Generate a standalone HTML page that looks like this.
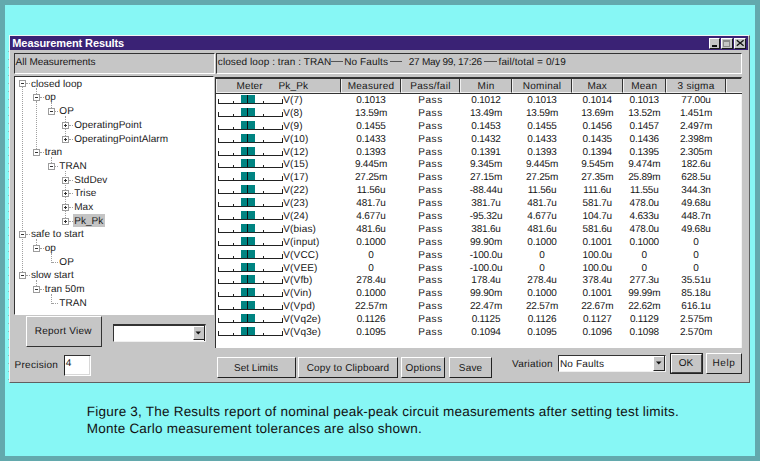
<!DOCTYPE html><html><head><meta charset="utf-8"><style>
*{margin:0;padding:0;box-sizing:border-box}
html,body{width:760px;height:461px;overflow:hidden;background:#63a9ad}
body{position:relative;font-family:"Liberation Sans",sans-serif;font-size:10px;letter-spacing:0.15px;color:#161616;text-rendering:geometricPrecision}
.b{position:absolute}
.t{position:absolute;white-space:pre;line-height:1}
</style></head><body>
<div class="b" style="left:5px;top:5px;width:750px;height:451px;background:#87f7f5"></div>
<div class="b" style="left:8px;top:51px;width:1px;height:330px;background:repeating-linear-gradient(to bottom,#8ab8bb 0,#8ab8bb 1px,transparent 1px,transparent 8px)"></div>
<div class="b" style="left:9px;top:35px;width:741px;height:348px;background:#c6c6c6;border-top:1px solid #f4f4f4;border-left:1px solid #f4f4f4;border-right:1px solid #606060;border-bottom:1px solid #606060"></div>
<div class="b" style="left:10px;top:36px;width:738px;height:13.7px;background:#3a2275"></div>
<div class="t" style="left:12.3px;top:38.3px;font-size:11px;font-weight:bold;color:#fff;letter-spacing:-0.1px;text-rendering:auto">Measurement Results</div>
<div class="b" style="left:709px;top:38px;width:11px;height:11px;background:#c6c6c6;border-top:1px solid #fff;border-left:1px solid #fff;border-right:1px solid #1a1a1a;border-bottom:1px solid #1a1a1a"></div>
<div class="b" style="left:721px;top:38px;width:11.5px;height:11px;background:#c6c6c6;border-top:1px solid #fff;border-left:1px solid #fff;border-right:1px solid #1a1a1a;border-bottom:1px solid #1a1a1a"></div>
<div class="b" style="left:734px;top:38px;width:12px;height:11px;background:#c6c6c6;border-top:1px solid #fff;border-left:1px solid #fff;border-right:1px solid #1a1a1a;border-bottom:1px solid #1a1a1a"></div>
<div class="b" style="left:712px;top:45px;width:4.8px;height:1.5px;background:#111"></div>
<div class="b" style="left:723.3px;top:39.5px;width:6.7px;height:7.2px;border:1px solid #8a8a8a;border-top-width:2px"></div>
<svg class="b" style="left:734px;top:38px" width="12" height="11"><path d="M2.8 2.3 L9.6 7.8 M9.6 2.3 L2.8 7.8" stroke="#111" stroke-width="1.3"/></svg>
<div class="b" style="left:14px;top:53px;width:200.5px;height:21px;border-top:1px solid #333;border-left:1px solid #333;border-right:1px solid #fff;border-bottom:1px solid #fff"></div>
<div class="t" style="left:15.5px;top:58px;letter-spacing:0">All Measurements</div>
<div class="b" style="left:215.5px;top:53px;width:526px;height:20.5px;border-top:1px solid #333;border-left:1px solid #333;border-right:1px solid #fff;border-bottom:1px solid #fff"></div>
<div class="t" style="left:217.8px;top:58px;letter-spacing:0.08px">closed loop : tran : TRAN</div>
<div class="b" style="left:330.5px;top:60.6px;width:12px;height:1px;background:#555"></div>
<div class="t" style="left:344.2px;top:58px;letter-spacing:0.12px">No Faults</div>
<div class="b" style="left:389.7px;top:60.6px;width:12.5px;height:1px;background:#555"></div>
<div class="t" style="left:408.8px;top:58px;letter-spacing:-0.27px">27 May 99, 17:26</div>
<div class="b" style="left:484px;top:60.6px;width:12.6px;height:1px;background:#555"></div>
<div class="t" style="left:498.5px;top:58px;letter-spacing:0.12px">fail/total = 0/19</div>
<div class="b" style="left:14px;top:75.5px;width:200px;height:239px;background:#fff;border-top:1px solid #333;border-left:1px solid #333;border-right:1px solid #fff;border-bottom:1px solid #fff"></div>
<div class="b" style="left:22px;top:87px;width:1px;height:185px;border-left:1px dotted #a0a0a0"></div>
<div class="b" style="left:36px;top:88px;width:1px;height:6px;border-left:1px dotted #a0a0a0"></div>
<div class="b" style="left:36px;top:101px;width:1px;height:48px;border-left:1px dotted #a0a0a0"></div>
<div class="b" style="left:51px;top:102px;width:1px;height:6px;border-left:1px dotted #a0a0a0"></div>
<div class="b" style="left:51px;top:157px;width:1px;height:6px;border-left:1px dotted #a0a0a0"></div>
<div class="b" style="left:65px;top:116px;width:1px;height:6px;border-left:1px dotted #a0a0a0"></div>
<div class="b" style="left:65px;top:129px;width:1px;height:7px;border-left:1px dotted #a0a0a0"></div>
<div class="b" style="left:65px;top:171px;width:1px;height:47px;border-left:1px dotted #a0a0a0"></div>
<div class="b" style="left:36px;top:239px;width:1px;height:6px;border-left:1px dotted #a0a0a0"></div>
<div class="b" style="left:36px;top:280px;width:1px;height:6px;border-left:1px dotted #a0a0a0"></div>
<div class="b" style="left:51px;top:253px;width:1px;height:10px;border-left:1px dotted #a0a0a0"></div>
<div class="b" style="left:51px;top:294px;width:1px;height:10px;border-left:1px dotted #a0a0a0"></div>
<div class="b" style="left:26px;top:83px;width:4px;height:1px;border-top:1px dotted #a0a0a0"></div>
<div class="b" style="left:19px;top:80px;width:7px;height:7px;border:1px solid #9c9c9c;background:#fff"></div>
<div class="b" style="left:21px;top:83px;width:3px;height:1px;background:#333"></div>
<div class="t" style="left:30.9px;top:80px;color:#1a1a1a;letter-spacing:0.06px">closed loop</div>
<div class="b" style="left:40px;top:97px;width:4px;height:1px;border-top:1px dotted #a0a0a0"></div>
<div class="b" style="left:33px;top:94px;width:7px;height:7px;border:1px solid #9c9c9c;background:#fff"></div>
<div class="b" style="left:35px;top:97px;width:3px;height:1px;background:#333"></div>
<div class="t" style="left:44.7px;top:93px;color:#1a1a1a;letter-spacing:0.06px">op</div>
<div class="b" style="left:55px;top:111px;width:3px;height:1px;border-top:1px dotted #a0a0a0"></div>
<div class="b" style="left:48px;top:108px;width:7px;height:7px;border:1px solid #9c9c9c;background:#fff"></div>
<div class="b" style="left:50px;top:111px;width:3px;height:1px;background:#333"></div>
<div class="t" style="left:59.3px;top:107px;color:#1a1a1a;letter-spacing:0.06px">OP</div>
<div class="b" style="left:69px;top:125px;width:4px;height:1px;border-top:1px dotted #a0a0a0"></div>
<div class="b" style="left:62px;top:122px;width:7px;height:7px;border:1px solid #9c9c9c;background:#fff"></div>
<div class="b" style="left:64px;top:125px;width:3px;height:1px;background:#333"></div>
<div class="b" style="left:65px;top:124px;width:1px;height:3px;background:#333"></div>
<div class="t" style="left:74.2px;top:121px;color:#1a1a1a;letter-spacing:0.06px">OperatingPoint</div>
<div class="b" style="left:69px;top:139px;width:4px;height:1px;border-top:1px dotted #a0a0a0"></div>
<div class="b" style="left:62px;top:136px;width:7px;height:7px;border:1px solid #9c9c9c;background:#fff"></div>
<div class="b" style="left:64px;top:139px;width:3px;height:1px;background:#333"></div>
<div class="b" style="left:65px;top:138px;width:1px;height:3px;background:#333"></div>
<div class="t" style="left:74.2px;top:135px;color:#1a1a1a;letter-spacing:0.06px">OperatingPointAlarm</div>
<div class="b" style="left:40px;top:152px;width:4px;height:1px;border-top:1px dotted #a0a0a0"></div>
<div class="b" style="left:33px;top:149px;width:7px;height:7px;border:1px solid #9c9c9c;background:#fff"></div>
<div class="b" style="left:35px;top:152px;width:3px;height:1px;background:#333"></div>
<div class="t" style="left:44.7px;top:148px;color:#1a1a1a;letter-spacing:0.06px">tran</div>
<div class="b" style="left:55px;top:166px;width:3px;height:1px;border-top:1px dotted #a0a0a0"></div>
<div class="b" style="left:48px;top:163px;width:7px;height:7px;border:1px solid #9c9c9c;background:#fff"></div>
<div class="b" style="left:50px;top:166px;width:3px;height:1px;background:#333"></div>
<div class="t" style="left:59.3px;top:162px;color:#1a1a1a;letter-spacing:0.06px">TRAN</div>
<div class="b" style="left:69px;top:180px;width:4px;height:1px;border-top:1px dotted #a0a0a0"></div>
<div class="b" style="left:62px;top:177px;width:7px;height:7px;border:1px solid #9c9c9c;background:#fff"></div>
<div class="b" style="left:64px;top:180px;width:3px;height:1px;background:#333"></div>
<div class="b" style="left:65px;top:179px;width:1px;height:3px;background:#333"></div>
<div class="t" style="left:74.2px;top:176px;color:#1a1a1a;letter-spacing:0.06px">StdDev</div>
<div class="b" style="left:69px;top:193px;width:4px;height:1px;border-top:1px dotted #a0a0a0"></div>
<div class="b" style="left:62px;top:190px;width:7px;height:7px;border:1px solid #9c9c9c;background:#fff"></div>
<div class="b" style="left:64px;top:193px;width:3px;height:1px;background:#333"></div>
<div class="b" style="left:65px;top:192px;width:1px;height:3px;background:#333"></div>
<div class="t" style="left:74.2px;top:189px;color:#1a1a1a;letter-spacing:0.06px">Trise</div>
<div class="b" style="left:69px;top:207px;width:4px;height:1px;border-top:1px dotted #a0a0a0"></div>
<div class="b" style="left:62px;top:204px;width:7px;height:7px;border:1px solid #9c9c9c;background:#fff"></div>
<div class="b" style="left:64px;top:207px;width:3px;height:1px;background:#333"></div>
<div class="b" style="left:65px;top:206px;width:1px;height:3px;background:#333"></div>
<div class="t" style="left:74.2px;top:203px;color:#1a1a1a;letter-spacing:0.06px">Max</div>
<div class="b" style="left:73px;top:213.5px;width:32.3px;height:13px;background:#c4c4c4"></div>
<div class="b" style="left:69px;top:221px;width:4px;height:1px;border-top:1px dotted #a0a0a0"></div>
<div class="b" style="left:62px;top:218px;width:7px;height:7px;border:1px solid #9c9c9c;background:#fff"></div>
<div class="b" style="left:64px;top:221px;width:3px;height:1px;background:#333"></div>
<div class="b" style="left:65px;top:220px;width:1px;height:3px;background:#333"></div>
<div class="t" style="left:74.2px;top:217px;color:#1a1a1a;letter-spacing:0.06px">Pk_Pk</div>
<div class="b" style="left:26px;top:234px;width:4px;height:1px;border-top:1px dotted #a0a0a0"></div>
<div class="b" style="left:19px;top:231px;width:7px;height:7px;border:1px solid #9c9c9c;background:#fff"></div>
<div class="b" style="left:21px;top:234px;width:3px;height:1px;background:#333"></div>
<div class="t" style="left:30.9px;top:230px;color:#1a1a1a;letter-spacing:0.06px">safe to start</div>
<div class="b" style="left:40px;top:248px;width:4px;height:1px;border-top:1px dotted #a0a0a0"></div>
<div class="b" style="left:33px;top:245px;width:7px;height:7px;border:1px solid #9c9c9c;background:#fff"></div>
<div class="b" style="left:35px;top:248px;width:3px;height:1px;background:#333"></div>
<div class="t" style="left:44.7px;top:244px;color:#1a1a1a;letter-spacing:0.06px">op</div>
<div class="b" style="left:52px;top:262px;width:6px;height:1px;border-top:1px dotted #a0a0a0"></div>
<div class="t" style="left:59.3px;top:258px;color:#1a1a1a;letter-spacing:0.06px">OP</div>
<div class="b" style="left:26px;top:275px;width:4px;height:1px;border-top:1px dotted #a0a0a0"></div>
<div class="b" style="left:19px;top:272px;width:7px;height:7px;border:1px solid #9c9c9c;background:#fff"></div>
<div class="b" style="left:21px;top:275px;width:3px;height:1px;background:#333"></div>
<div class="t" style="left:30.9px;top:271px;color:#1a1a1a;letter-spacing:0.06px">slow start</div>
<div class="b" style="left:40px;top:289px;width:4px;height:1px;border-top:1px dotted #a0a0a0"></div>
<div class="b" style="left:33px;top:286px;width:7px;height:7px;border:1px solid #9c9c9c;background:#fff"></div>
<div class="b" style="left:35px;top:289px;width:3px;height:1px;background:#333"></div>
<div class="t" style="left:44.7px;top:285px;color:#1a1a1a;letter-spacing:0.06px">tran 50m</div>
<div class="b" style="left:52px;top:303px;width:6px;height:1px;border-top:1px dotted #a0a0a0"></div>
<div class="t" style="left:59.3px;top:299px;color:#1a1a1a;letter-spacing:0.06px">TRAN</div>
<div class="b" style="left:25.6px;top:315.6px;width:76.4px;height:31px;background:#c6c6c6;border-top:1px solid #fff;border-left:1px solid #fff;border-right:1px solid #333;border-bottom:1px solid #333"></div>
<div class="t" style="left:34.8px;top:327px;letter-spacing:0.24px">Report View</div>
<div class="b" style="left:113px;top:324px;width:93px;height:18px;background:#fff;border-top:2px solid #333;border-left:1px solid #333;border-right:1px solid #f0f0f0;border-bottom:1px solid #f0f0f0;box-shadow:inset -1px 0 #222"></div>
<div class="b" style="left:193px;top:326px;width:11px;height:14px;background:#c6c6c6;border-top:1px solid #fff;border-left:1px solid #fff;border-bottom:1px solid #222"></div>
<svg class="b" style="left:193px;top:326px" width="11" height="14"><path d="M2.5 5.5 L8 5.5 L5.25 8.5 Z" fill="#111"/></svg>
<div class="t" style="left:14.5px;top:361.3px;letter-spacing:0.28px">Precision</div>
<div class="b" style="left:64px;top:354.5px;width:26.5px;height:21px;background:#fff;border-top:1.5px solid #333;border-left:1.5px solid #222;border-right:1px solid #fff;border-bottom:1px solid #fff;box-shadow:inset -1px -1px #d8d8d8"></div>
<div class="t" style="left:65.8px;top:359px;letter-spacing:0">4</div>
<div class="b" style="left:215px;top:77px;width:527px;height:271px;background:#fff;border-left:1px solid #333;border-top:2px solid #333;border-right:1px solid #f4f4f4"></div>
<div class="b" style="left:216px;top:79px;width:525.5px;height:14.5px;background:#c6c6c6;border-bottom:1.5px solid #333"></div>
<div class="b" style="left:216px;top:79px;width:125px;height:13.5px;border-left:1px solid #f0f0f0;border-bottom:1px solid #f0f0f0;border-right:1px solid #333"></div>
<div class="b" style="left:341px;top:79px;width:60px;height:13.5px;border-left:1px solid #f0f0f0;border-bottom:1px solid #f0f0f0;border-right:1px solid #333"></div>
<div class="b" style="left:401px;top:79px;width:59px;height:13.5px;border-left:1px solid #f0f0f0;border-bottom:1px solid #f0f0f0;border-right:1px solid #333"></div>
<div class="b" style="left:460px;top:79px;width:52px;height:13.5px;border-left:1px solid #f0f0f0;border-bottom:1px solid #f0f0f0;border-right:1px solid #333"></div>
<div class="b" style="left:512px;top:79px;width:60px;height:13.5px;border-left:1px solid #f0f0f0;border-bottom:1px solid #f0f0f0;border-right:1px solid #333"></div>
<div class="b" style="left:572px;top:79px;width:50.5px;height:13.5px;border-left:1px solid #f0f0f0;border-bottom:1px solid #f0f0f0;border-right:1px solid #333"></div>
<div class="b" style="left:622.5px;top:79px;width:43.5px;height:13.5px;border-left:1px solid #f0f0f0;border-bottom:1px solid #f0f0f0;border-right:1px solid #333"></div>
<div class="b" style="left:666px;top:79px;width:60px;height:13.5px;border-left:1px solid #f0f0f0;border-bottom:1px solid #f0f0f0;border-right:1px solid #333"></div>
<div class="b" style="left:726px;top:79px;width:15.5px;height:13.5px;border-left:1px solid #f0f0f0;border-bottom:1px solid #f0f0f0;"></div>
<div class="t" style="left:236.5px;top:82px;">Meter</div>
<div class="t" style="left:278.5px;top:82px;">Pk_Pk</div>
<div class="t" style="left:341px;top:82px;width:60px;text-align:center;letter-spacing:0.28px">Measured</div>
<div class="t" style="left:401px;top:82px;width:59px;text-align:center;letter-spacing:0.28px">Pass/fail</div>
<div class="t" style="left:460px;top:82px;width:52px;text-align:center;letter-spacing:0.28px">Min</div>
<div class="t" style="left:512px;top:82px;width:60px;text-align:center;letter-spacing:0.28px">Nominal</div>
<div class="t" style="left:572px;top:82px;width:50.5px;text-align:center;letter-spacing:0.28px">Max</div>
<div class="t" style="left:622.5px;top:82px;width:43.5px;text-align:center;letter-spacing:0.28px">Mean</div>
<div class="t" style="left:666px;top:82px;width:60px;text-align:center;letter-spacing:0.28px">3 sigma</div>
<div class="b" style="left:218px;top:99px;width:64.5px;height:5px;border-left:1px solid #222;border-right:1px solid #222;border-bottom:1px solid #222"></div>
<div class="b" style="left:232.5px;top:101px;width:1px;height:2px;background:#222"></div>
<div class="b" style="left:262.5px;top:101px;width:1px;height:2px;background:#222"></div>
<div class="b" style="left:240.6px;top:95px;width:14px;height:8px;background:#008482"></div>
<div class="b" style="left:247px;top:95px;width:1px;height:8px;background:#111"></div>
<div class="t" style="left:283.3px;top:96px;">V(7)</div>
<div class="t" style="left:341px;top:96px;width:60px;text-align:center;letter-spacing:-0.2px">0.1013</div>
<div class="t" style="left:401px;top:96px;width:59px;text-align:center;letter-spacing:0.6px">Pass</div>
<div class="t" style="left:460px;top:96px;width:52px;text-align:center;letter-spacing:-0.2px">0.1012</div>
<div class="t" style="left:512px;top:96px;width:60px;text-align:center;letter-spacing:-0.2px">0.1013</div>
<div class="t" style="left:572px;top:96px;width:50.5px;text-align:center;letter-spacing:-0.2px">0.1014</div>
<div class="t" style="left:622.5px;top:96px;width:43.5px;text-align:center;letter-spacing:-0.2px">0.1013</div>
<div class="t" style="left:666px;top:96px;width:60px;text-align:center;letter-spacing:-0.2px">77.00u</div>
<div class="b" style="left:218px;top:112px;width:64.5px;height:5px;border-left:1px solid #222;border-right:1px solid #222;border-bottom:1px solid #222"></div>
<div class="b" style="left:232.5px;top:114px;width:1px;height:2px;background:#222"></div>
<div class="b" style="left:262.5px;top:114px;width:1px;height:2px;background:#222"></div>
<div class="b" style="left:240.6px;top:108px;width:14px;height:8px;background:#008482"></div>
<div class="b" style="left:247px;top:108px;width:1px;height:8px;background:#111"></div>
<div class="t" style="left:283.3px;top:109px;">V(8)</div>
<div class="t" style="left:341px;top:109px;width:60px;text-align:center;letter-spacing:-0.2px">13.59m</div>
<div class="t" style="left:401px;top:109px;width:59px;text-align:center;letter-spacing:0.6px">Pass</div>
<div class="t" style="left:460px;top:109px;width:52px;text-align:center;letter-spacing:-0.2px">13.49m</div>
<div class="t" style="left:512px;top:109px;width:60px;text-align:center;letter-spacing:-0.2px">13.59m</div>
<div class="t" style="left:572px;top:109px;width:50.5px;text-align:center;letter-spacing:-0.2px">13.69m</div>
<div class="t" style="left:622.5px;top:109px;width:43.5px;text-align:center;letter-spacing:-0.2px">13.52m</div>
<div class="t" style="left:666px;top:109px;width:60px;text-align:center;letter-spacing:-0.2px">1.451m</div>
<div class="b" style="left:218px;top:125px;width:64.5px;height:5px;border-left:1px solid #222;border-right:1px solid #222;border-bottom:1px solid #222"></div>
<div class="b" style="left:232.5px;top:127px;width:1px;height:2px;background:#222"></div>
<div class="b" style="left:262.5px;top:127px;width:1px;height:2px;background:#222"></div>
<div class="b" style="left:240.6px;top:121px;width:14px;height:8px;background:#008482"></div>
<div class="b" style="left:247px;top:121px;width:1px;height:8px;background:#111"></div>
<div class="t" style="left:283.3px;top:122px;">V(9)</div>
<div class="t" style="left:341px;top:122px;width:60px;text-align:center;letter-spacing:-0.2px">0.1455</div>
<div class="t" style="left:401px;top:122px;width:59px;text-align:center;letter-spacing:0.6px">Pass</div>
<div class="t" style="left:460px;top:122px;width:52px;text-align:center;letter-spacing:-0.2px">0.1453</div>
<div class="t" style="left:512px;top:122px;width:60px;text-align:center;letter-spacing:-0.2px">0.1455</div>
<div class="t" style="left:572px;top:122px;width:50.5px;text-align:center;letter-spacing:-0.2px">0.1456</div>
<div class="t" style="left:622.5px;top:122px;width:43.5px;text-align:center;letter-spacing:-0.2px">0.1457</div>
<div class="t" style="left:666px;top:122px;width:60px;text-align:center;letter-spacing:-0.2px">2.497m</div>
<div class="b" style="left:218px;top:138px;width:64.5px;height:5px;border-left:1px solid #222;border-right:1px solid #222;border-bottom:1px solid #222"></div>
<div class="b" style="left:232.5px;top:140px;width:1px;height:2px;background:#222"></div>
<div class="b" style="left:262.5px;top:140px;width:1px;height:2px;background:#222"></div>
<div class="b" style="left:240.6px;top:134px;width:14px;height:8px;background:#008482"></div>
<div class="b" style="left:247px;top:134px;width:1px;height:8px;background:#111"></div>
<div class="t" style="left:283.3px;top:135px;">V(10)</div>
<div class="t" style="left:341px;top:135px;width:60px;text-align:center;letter-spacing:-0.2px">0.1433</div>
<div class="t" style="left:401px;top:135px;width:59px;text-align:center;letter-spacing:0.6px">Pass</div>
<div class="t" style="left:460px;top:135px;width:52px;text-align:center;letter-spacing:-0.2px">0.1432</div>
<div class="t" style="left:512px;top:135px;width:60px;text-align:center;letter-spacing:-0.2px">0.1433</div>
<div class="t" style="left:572px;top:135px;width:50.5px;text-align:center;letter-spacing:-0.2px">0.1435</div>
<div class="t" style="left:622.5px;top:135px;width:43.5px;text-align:center;letter-spacing:-0.2px">0.1436</div>
<div class="t" style="left:666px;top:135px;width:60px;text-align:center;letter-spacing:-0.2px">2.398m</div>
<div class="b" style="left:218px;top:151px;width:64.5px;height:5px;border-left:1px solid #222;border-right:1px solid #222;border-bottom:1px solid #222"></div>
<div class="b" style="left:232.5px;top:153px;width:1px;height:2px;background:#222"></div>
<div class="b" style="left:262.5px;top:153px;width:1px;height:2px;background:#222"></div>
<div class="b" style="left:240.6px;top:147px;width:14px;height:8px;background:#008482"></div>
<div class="b" style="left:247px;top:147px;width:1px;height:8px;background:#111"></div>
<div class="t" style="left:283.3px;top:148px;">V(12)</div>
<div class="t" style="left:341px;top:148px;width:60px;text-align:center;letter-spacing:-0.2px">0.1393</div>
<div class="t" style="left:401px;top:148px;width:59px;text-align:center;letter-spacing:0.6px">Pass</div>
<div class="t" style="left:460px;top:148px;width:52px;text-align:center;letter-spacing:-0.2px">0.1391</div>
<div class="t" style="left:512px;top:148px;width:60px;text-align:center;letter-spacing:-0.2px">0.1393</div>
<div class="t" style="left:572px;top:148px;width:50.5px;text-align:center;letter-spacing:-0.2px">0.1394</div>
<div class="t" style="left:622.5px;top:148px;width:43.5px;text-align:center;letter-spacing:-0.2px">0.1395</div>
<div class="t" style="left:666px;top:148px;width:60px;text-align:center;letter-spacing:-0.2px">2.305m</div>
<div class="b" style="left:218px;top:163px;width:64.5px;height:5px;border-left:1px solid #222;border-right:1px solid #222;border-bottom:1px solid #222"></div>
<div class="b" style="left:232.5px;top:165px;width:1px;height:2px;background:#222"></div>
<div class="b" style="left:262.5px;top:165px;width:1px;height:2px;background:#222"></div>
<div class="b" style="left:240.6px;top:159px;width:14px;height:8px;background:#008482"></div>
<div class="b" style="left:247px;top:159px;width:1px;height:8px;background:#111"></div>
<div class="t" style="left:283.3px;top:160px;">V(15)</div>
<div class="t" style="left:341px;top:160px;width:60px;text-align:center;letter-spacing:-0.2px">9.445m</div>
<div class="t" style="left:401px;top:160px;width:59px;text-align:center;letter-spacing:0.6px">Pass</div>
<div class="t" style="left:460px;top:160px;width:52px;text-align:center;letter-spacing:-0.2px">9.345m</div>
<div class="t" style="left:512px;top:160px;width:60px;text-align:center;letter-spacing:-0.2px">9.445m</div>
<div class="t" style="left:572px;top:160px;width:50.5px;text-align:center;letter-spacing:-0.2px">9.545m</div>
<div class="t" style="left:622.5px;top:160px;width:43.5px;text-align:center;letter-spacing:-0.2px">9.474m</div>
<div class="t" style="left:666px;top:160px;width:60px;text-align:center;letter-spacing:-0.2px">182.6u</div>
<div class="b" style="left:218px;top:176px;width:64.5px;height:5px;border-left:1px solid #222;border-right:1px solid #222;border-bottom:1px solid #222"></div>
<div class="b" style="left:232.5px;top:178px;width:1px;height:2px;background:#222"></div>
<div class="b" style="left:262.5px;top:178px;width:1px;height:2px;background:#222"></div>
<div class="b" style="left:240.6px;top:172px;width:14px;height:8px;background:#008482"></div>
<div class="b" style="left:247px;top:172px;width:1px;height:8px;background:#111"></div>
<div class="t" style="left:283.3px;top:173px;">V(17)</div>
<div class="t" style="left:341px;top:173px;width:60px;text-align:center;letter-spacing:-0.2px">27.25m</div>
<div class="t" style="left:401px;top:173px;width:59px;text-align:center;letter-spacing:0.6px">Pass</div>
<div class="t" style="left:460px;top:173px;width:52px;text-align:center;letter-spacing:-0.2px">27.15m</div>
<div class="t" style="left:512px;top:173px;width:60px;text-align:center;letter-spacing:-0.2px">27.25m</div>
<div class="t" style="left:572px;top:173px;width:50.5px;text-align:center;letter-spacing:-0.2px">27.35m</div>
<div class="t" style="left:622.5px;top:173px;width:43.5px;text-align:center;letter-spacing:-0.2px">25.89m</div>
<div class="t" style="left:666px;top:173px;width:60px;text-align:center;letter-spacing:-0.2px">628.5u</div>
<div class="b" style="left:218px;top:189px;width:64.5px;height:5px;border-left:1px solid #222;border-right:1px solid #222;border-bottom:1px solid #222"></div>
<div class="b" style="left:232.5px;top:191px;width:1px;height:2px;background:#222"></div>
<div class="b" style="left:262.5px;top:191px;width:1px;height:2px;background:#222"></div>
<div class="b" style="left:240.6px;top:185px;width:14px;height:8px;background:#008482"></div>
<div class="b" style="left:247px;top:185px;width:1px;height:8px;background:#111"></div>
<div class="t" style="left:283.3px;top:186px;">V(22)</div>
<div class="t" style="left:341px;top:186px;width:60px;text-align:center;letter-spacing:-0.2px">11.56u</div>
<div class="t" style="left:401px;top:186px;width:59px;text-align:center;letter-spacing:0.6px">Pass</div>
<div class="t" style="left:460px;top:186px;width:52px;text-align:center;letter-spacing:-0.2px">-88.44u</div>
<div class="t" style="left:512px;top:186px;width:60px;text-align:center;letter-spacing:-0.2px">11.56u</div>
<div class="t" style="left:572px;top:186px;width:50.5px;text-align:center;letter-spacing:-0.2px">111.6u</div>
<div class="t" style="left:622.5px;top:186px;width:43.5px;text-align:center;letter-spacing:-0.2px">11.55u</div>
<div class="t" style="left:666px;top:186px;width:60px;text-align:center;letter-spacing:-0.2px">344.3n</div>
<div class="b" style="left:218px;top:202px;width:64.5px;height:5px;border-left:1px solid #222;border-right:1px solid #222;border-bottom:1px solid #222"></div>
<div class="b" style="left:232.5px;top:204px;width:1px;height:2px;background:#222"></div>
<div class="b" style="left:262.5px;top:204px;width:1px;height:2px;background:#222"></div>
<div class="b" style="left:240.6px;top:198px;width:14px;height:8px;background:#008482"></div>
<div class="b" style="left:247px;top:198px;width:1px;height:8px;background:#111"></div>
<div class="t" style="left:283.3px;top:199px;">V(23)</div>
<div class="t" style="left:341px;top:199px;width:60px;text-align:center;letter-spacing:-0.2px">481.7u</div>
<div class="t" style="left:401px;top:199px;width:59px;text-align:center;letter-spacing:0.6px">Pass</div>
<div class="t" style="left:460px;top:199px;width:52px;text-align:center;letter-spacing:-0.2px">381.7u</div>
<div class="t" style="left:512px;top:199px;width:60px;text-align:center;letter-spacing:-0.2px">481.7u</div>
<div class="t" style="left:572px;top:199px;width:50.5px;text-align:center;letter-spacing:-0.2px">581.7u</div>
<div class="t" style="left:622.5px;top:199px;width:43.5px;text-align:center;letter-spacing:-0.2px">478.0u</div>
<div class="t" style="left:666px;top:199px;width:60px;text-align:center;letter-spacing:-0.2px">49.68u</div>
<div class="b" style="left:218px;top:215px;width:64.5px;height:5px;border-left:1px solid #222;border-right:1px solid #222;border-bottom:1px solid #222"></div>
<div class="b" style="left:232.5px;top:217px;width:1px;height:2px;background:#222"></div>
<div class="b" style="left:262.5px;top:217px;width:1px;height:2px;background:#222"></div>
<div class="b" style="left:240.6px;top:211px;width:14px;height:8px;background:#008482"></div>
<div class="b" style="left:247px;top:211px;width:1px;height:8px;background:#111"></div>
<div class="t" style="left:283.3px;top:212px;">V(24)</div>
<div class="t" style="left:341px;top:212px;width:60px;text-align:center;letter-spacing:-0.2px">4.677u</div>
<div class="t" style="left:401px;top:212px;width:59px;text-align:center;letter-spacing:0.6px">Pass</div>
<div class="t" style="left:460px;top:212px;width:52px;text-align:center;letter-spacing:-0.2px">-95.32u</div>
<div class="t" style="left:512px;top:212px;width:60px;text-align:center;letter-spacing:-0.2px">4.677u</div>
<div class="t" style="left:572px;top:212px;width:50.5px;text-align:center;letter-spacing:-0.2px">104.7u</div>
<div class="t" style="left:622.5px;top:212px;width:43.5px;text-align:center;letter-spacing:-0.2px">4.633u</div>
<div class="t" style="left:666px;top:212px;width:60px;text-align:center;letter-spacing:-0.2px">448.7n</div>
<div class="b" style="left:218px;top:228px;width:64.5px;height:5px;border-left:1px solid #222;border-right:1px solid #222;border-bottom:1px solid #222"></div>
<div class="b" style="left:232.5px;top:230px;width:1px;height:2px;background:#222"></div>
<div class="b" style="left:262.5px;top:230px;width:1px;height:2px;background:#222"></div>
<div class="b" style="left:240.6px;top:224px;width:14px;height:8px;background:#008482"></div>
<div class="b" style="left:247px;top:224px;width:1px;height:8px;background:#111"></div>
<div class="t" style="left:283.3px;top:225px;">V(bias)</div>
<div class="t" style="left:341px;top:225px;width:60px;text-align:center;letter-spacing:-0.2px">481.6u</div>
<div class="t" style="left:401px;top:225px;width:59px;text-align:center;letter-spacing:0.6px">Pass</div>
<div class="t" style="left:460px;top:225px;width:52px;text-align:center;letter-spacing:-0.2px">381.6u</div>
<div class="t" style="left:512px;top:225px;width:60px;text-align:center;letter-spacing:-0.2px">481.6u</div>
<div class="t" style="left:572px;top:225px;width:50.5px;text-align:center;letter-spacing:-0.2px">581.6u</div>
<div class="t" style="left:622.5px;top:225px;width:43.5px;text-align:center;letter-spacing:-0.2px">478.0u</div>
<div class="t" style="left:666px;top:225px;width:60px;text-align:center;letter-spacing:-0.2px">49.68u</div>
<div class="b" style="left:218px;top:241px;width:64.5px;height:5px;border-left:1px solid #222;border-right:1px solid #222;border-bottom:1px solid #222"></div>
<div class="b" style="left:232.5px;top:243px;width:1px;height:2px;background:#222"></div>
<div class="b" style="left:262.5px;top:243px;width:1px;height:2px;background:#222"></div>
<div class="b" style="left:240.6px;top:237px;width:14px;height:8px;background:#008482"></div>
<div class="b" style="left:247px;top:237px;width:1px;height:8px;background:#111"></div>
<div class="t" style="left:283.3px;top:238px;">V(input)</div>
<div class="t" style="left:341px;top:238px;width:60px;text-align:center;letter-spacing:-0.2px">0.1000</div>
<div class="t" style="left:401px;top:238px;width:59px;text-align:center;letter-spacing:0.6px">Pass</div>
<div class="t" style="left:460px;top:238px;width:52px;text-align:center;letter-spacing:-0.2px">99.90m</div>
<div class="t" style="left:512px;top:238px;width:60px;text-align:center;letter-spacing:-0.2px">0.1000</div>
<div class="t" style="left:572px;top:238px;width:50.5px;text-align:center;letter-spacing:-0.2px">0.1001</div>
<div class="t" style="left:622.5px;top:238px;width:43.5px;text-align:center;letter-spacing:-0.2px">0.1000</div>
<div class="t" style="left:666px;top:238px;width:60px;text-align:center;letter-spacing:-0.2px">0</div>
<div class="b" style="left:218px;top:254px;width:64.5px;height:5px;border-left:1px solid #222;border-right:1px solid #222;border-bottom:1px solid #222"></div>
<div class="b" style="left:232.5px;top:256px;width:1px;height:2px;background:#222"></div>
<div class="b" style="left:262.5px;top:256px;width:1px;height:2px;background:#222"></div>
<div class="b" style="left:240.6px;top:250px;width:14px;height:8px;background:#008482"></div>
<div class="b" style="left:247px;top:250px;width:1px;height:8px;background:#111"></div>
<div class="t" style="left:283.3px;top:251px;">V(VCC)</div>
<div class="t" style="left:341px;top:251px;width:60px;text-align:center;letter-spacing:-0.2px">0</div>
<div class="t" style="left:401px;top:251px;width:59px;text-align:center;letter-spacing:0.6px">Pass</div>
<div class="t" style="left:460px;top:251px;width:52px;text-align:center;letter-spacing:-0.2px">-100.0u</div>
<div class="t" style="left:512px;top:251px;width:60px;text-align:center;letter-spacing:-0.2px">0</div>
<div class="t" style="left:572px;top:251px;width:50.5px;text-align:center;letter-spacing:-0.2px">100.0u</div>
<div class="t" style="left:622.5px;top:251px;width:43.5px;text-align:center;letter-spacing:-0.2px">0</div>
<div class="t" style="left:666px;top:251px;width:60px;text-align:center;letter-spacing:-0.2px">0</div>
<div class="b" style="left:218px;top:267px;width:64.5px;height:5px;border-left:1px solid #222;border-right:1px solid #222;border-bottom:1px solid #222"></div>
<div class="b" style="left:232.5px;top:269px;width:1px;height:2px;background:#222"></div>
<div class="b" style="left:262.5px;top:269px;width:1px;height:2px;background:#222"></div>
<div class="b" style="left:240.6px;top:263px;width:14px;height:8px;background:#008482"></div>
<div class="b" style="left:247px;top:263px;width:1px;height:8px;background:#111"></div>
<div class="t" style="left:283.3px;top:264px;">V(VEE)</div>
<div class="t" style="left:341px;top:264px;width:60px;text-align:center;letter-spacing:-0.2px">0</div>
<div class="t" style="left:401px;top:264px;width:59px;text-align:center;letter-spacing:0.6px">Pass</div>
<div class="t" style="left:460px;top:264px;width:52px;text-align:center;letter-spacing:-0.2px">-100.0u</div>
<div class="t" style="left:512px;top:264px;width:60px;text-align:center;letter-spacing:-0.2px">0</div>
<div class="t" style="left:572px;top:264px;width:50.5px;text-align:center;letter-spacing:-0.2px">100.0u</div>
<div class="t" style="left:622.5px;top:264px;width:43.5px;text-align:center;letter-spacing:-0.2px">0</div>
<div class="t" style="left:666px;top:264px;width:60px;text-align:center;letter-spacing:-0.2px">0</div>
<div class="b" style="left:218px;top:279px;width:64.5px;height:5px;border-left:1px solid #222;border-right:1px solid #222;border-bottom:1px solid #222"></div>
<div class="b" style="left:232.5px;top:281px;width:1px;height:2px;background:#222"></div>
<div class="b" style="left:262.5px;top:281px;width:1px;height:2px;background:#222"></div>
<div class="b" style="left:240.6px;top:275px;width:14px;height:8px;background:#008482"></div>
<div class="b" style="left:247px;top:275px;width:1px;height:8px;background:#111"></div>
<div class="t" style="left:283.3px;top:276px;">V(Vfb)</div>
<div class="t" style="left:341px;top:276px;width:60px;text-align:center;letter-spacing:-0.2px">278.4u</div>
<div class="t" style="left:401px;top:276px;width:59px;text-align:center;letter-spacing:0.6px">Pass</div>
<div class="t" style="left:460px;top:276px;width:52px;text-align:center;letter-spacing:-0.2px">178.4u</div>
<div class="t" style="left:512px;top:276px;width:60px;text-align:center;letter-spacing:-0.2px">278.4u</div>
<div class="t" style="left:572px;top:276px;width:50.5px;text-align:center;letter-spacing:-0.2px">378.4u</div>
<div class="t" style="left:622.5px;top:276px;width:43.5px;text-align:center;letter-spacing:-0.2px">277.3u</div>
<div class="t" style="left:666px;top:276px;width:60px;text-align:center;letter-spacing:-0.2px">35.51u</div>
<div class="b" style="left:218px;top:292px;width:64.5px;height:5px;border-left:1px solid #222;border-right:1px solid #222;border-bottom:1px solid #222"></div>
<div class="b" style="left:232.5px;top:294px;width:1px;height:2px;background:#222"></div>
<div class="b" style="left:262.5px;top:294px;width:1px;height:2px;background:#222"></div>
<div class="b" style="left:240.6px;top:288px;width:14px;height:8px;background:#008482"></div>
<div class="b" style="left:247px;top:288px;width:1px;height:8px;background:#111"></div>
<div class="t" style="left:283.3px;top:289px;">V(Vin)</div>
<div class="t" style="left:341px;top:289px;width:60px;text-align:center;letter-spacing:-0.2px">0.1000</div>
<div class="t" style="left:401px;top:289px;width:59px;text-align:center;letter-spacing:0.6px">Pass</div>
<div class="t" style="left:460px;top:289px;width:52px;text-align:center;letter-spacing:-0.2px">99.90m</div>
<div class="t" style="left:512px;top:289px;width:60px;text-align:center;letter-spacing:-0.2px">0.1000</div>
<div class="t" style="left:572px;top:289px;width:50.5px;text-align:center;letter-spacing:-0.2px">0.1001</div>
<div class="t" style="left:622.5px;top:289px;width:43.5px;text-align:center;letter-spacing:-0.2px">99.99m</div>
<div class="t" style="left:666px;top:289px;width:60px;text-align:center;letter-spacing:-0.2px">85.18u</div>
<div class="b" style="left:218px;top:305px;width:64.5px;height:5px;border-left:1px solid #222;border-right:1px solid #222;border-bottom:1px solid #222"></div>
<div class="b" style="left:232.5px;top:307px;width:1px;height:2px;background:#222"></div>
<div class="b" style="left:262.5px;top:307px;width:1px;height:2px;background:#222"></div>
<div class="b" style="left:240.6px;top:301px;width:14px;height:8px;background:#008482"></div>
<div class="b" style="left:247px;top:301px;width:1px;height:8px;background:#111"></div>
<div class="t" style="left:283.3px;top:302px;">V(Vpd)</div>
<div class="t" style="left:341px;top:302px;width:60px;text-align:center;letter-spacing:-0.2px">22.57m</div>
<div class="t" style="left:401px;top:302px;width:59px;text-align:center;letter-spacing:0.6px">Pass</div>
<div class="t" style="left:460px;top:302px;width:52px;text-align:center;letter-spacing:-0.2px">22.47m</div>
<div class="t" style="left:512px;top:302px;width:60px;text-align:center;letter-spacing:-0.2px">22.57m</div>
<div class="t" style="left:572px;top:302px;width:50.5px;text-align:center;letter-spacing:-0.2px">22.67m</div>
<div class="t" style="left:622.5px;top:302px;width:43.5px;text-align:center;letter-spacing:-0.2px">22.62m</div>
<div class="t" style="left:666px;top:302px;width:60px;text-align:center;letter-spacing:-0.2px">616.1u</div>
<div class="b" style="left:218px;top:318px;width:64.5px;height:5px;border-left:1px solid #222;border-right:1px solid #222;border-bottom:1px solid #222"></div>
<div class="b" style="left:232.5px;top:320px;width:1px;height:2px;background:#222"></div>
<div class="b" style="left:262.5px;top:320px;width:1px;height:2px;background:#222"></div>
<div class="b" style="left:240.6px;top:314px;width:14px;height:8px;background:#008482"></div>
<div class="b" style="left:247px;top:314px;width:1px;height:8px;background:#111"></div>
<div class="t" style="left:283.3px;top:315px;">V(Vq2e)</div>
<div class="t" style="left:341px;top:315px;width:60px;text-align:center;letter-spacing:-0.2px">0.1126</div>
<div class="t" style="left:401px;top:315px;width:59px;text-align:center;letter-spacing:0.6px">Pass</div>
<div class="t" style="left:460px;top:315px;width:52px;text-align:center;letter-spacing:-0.2px">0.1125</div>
<div class="t" style="left:512px;top:315px;width:60px;text-align:center;letter-spacing:-0.2px">0.1126</div>
<div class="t" style="left:572px;top:315px;width:50.5px;text-align:center;letter-spacing:-0.2px">0.1127</div>
<div class="t" style="left:622.5px;top:315px;width:43.5px;text-align:center;letter-spacing:-0.2px">0.1129</div>
<div class="t" style="left:666px;top:315px;width:60px;text-align:center;letter-spacing:-0.2px">2.575m</div>
<div class="b" style="left:218px;top:331px;width:64.5px;height:5px;border-left:1px solid #222;border-right:1px solid #222;border-bottom:1px solid #222"></div>
<div class="b" style="left:232.5px;top:333px;width:1px;height:2px;background:#222"></div>
<div class="b" style="left:262.5px;top:333px;width:1px;height:2px;background:#222"></div>
<div class="b" style="left:240.6px;top:327px;width:14px;height:8px;background:#008482"></div>
<div class="b" style="left:247px;top:327px;width:1px;height:8px;background:#111"></div>
<div class="t" style="left:283.3px;top:328px;">V(Vq3e)</div>
<div class="t" style="left:341px;top:328px;width:60px;text-align:center;letter-spacing:-0.2px">0.1095</div>
<div class="t" style="left:401px;top:328px;width:59px;text-align:center;letter-spacing:0.6px">Pass</div>
<div class="t" style="left:460px;top:328px;width:52px;text-align:center;letter-spacing:-0.2px">0.1094</div>
<div class="t" style="left:512px;top:328px;width:60px;text-align:center;letter-spacing:-0.2px">0.1095</div>
<div class="t" style="left:572px;top:328px;width:50.5px;text-align:center;letter-spacing:-0.2px">0.1096</div>
<div class="t" style="left:622.5px;top:328px;width:43.5px;text-align:center;letter-spacing:-0.2px">0.1098</div>
<div class="t" style="left:666px;top:328px;width:60px;text-align:center;letter-spacing:-0.2px">2.570m</div>
<div class="b" style="left:216.5px;top:357.2px;width:79px;height:21.3px;background:#c6c6c6;border-top:1px solid #fff;border-left:1px solid #fff;border-right:1px solid #222;border-bottom:1px solid #222"></div>
<div class="t" style="left:216.5px;top:364px;width:79px;text-align:center;letter-spacing:0px">Set Limits</div>
<div class="b" style="left:298px;top:357.2px;width:100px;height:21.3px;background:#c6c6c6;border-top:1px solid #fff;border-left:1px solid #fff;border-right:1px solid #222;border-bottom:1px solid #222"></div>
<div class="t" style="left:298px;top:364px;width:100px;text-align:center;letter-spacing:0.15px">Copy to Clipboard</div>
<div class="b" style="left:401.3px;top:357.2px;width:44px;height:21.3px;background:#c6c6c6;border-top:1px solid #fff;border-left:1px solid #fff;border-right:1px solid #222;border-bottom:1px solid #222"></div>
<div class="t" style="left:401.3px;top:364px;width:44px;text-align:center;letter-spacing:0.15px">Options</div>
<div class="b" style="left:448.8px;top:357.2px;width:43.5px;height:21.3px;background:#c6c6c6;border-top:1px solid #fff;border-left:1px solid #fff;border-right:1px solid #222;border-bottom:1px solid #222"></div>
<div class="t" style="left:448.8px;top:364px;width:43.5px;text-align:center;letter-spacing:0.15px">Save</div>
<div class="t" style="left:512px;top:360px;letter-spacing:0.22px">Variation</div>
<div class="b" style="left:558px;top:355px;width:108px;height:17px;background:#fff;border-top:1px solid #333;border-left:1px solid #333;border-right:1px solid #f0f0f0;border-bottom:1px solid #f0f0f0;box-shadow:inset -1px 0 #222"></div>
<div class="t" style="left:560px;top:360px;letter-spacing:0.15px">No Faults</div>
<div class="b" style="left:653px;top:356px;width:11px;height:15px;background:#c6c6c6;border-top:1px solid #fff;border-left:1px solid #fff;border-bottom:1px solid #222"></div>
<svg class="b" style="left:653px;top:356px" width="11" height="14"><path d="M3 5.5 L8.5 5.5 L5.75 8.5 Z" fill="#111"/></svg>
<div class="b" style="left:669.5px;top:352.5px;width:33px;height:21.5px;background:#c6c6c6;border:1px solid #222"></div>
<div class="b" style="left:670.5px;top:353.5px;width:31px;height:19.5px;border-top:1px solid #fff;border-left:1px solid #fff;border-right:1px solid #444;border-bottom:1px solid #444"></div>
<div class="t" style="left:669.5px;top:359px;width:33px;text-align:center;letter-spacing:0px">OK</div>
<div class="b" style="left:706px;top:352.5px;width:36px;height:21.5px;background:#c6c6c6;border-top:1px solid #fff;border-left:1px solid #fff;border-right:1px solid #222;border-bottom:1px solid #222"></div>
<div class="t" style="left:706px;top:359px;width:36px;text-align:center;letter-spacing:0.6px">Help</div>
<div class="t" style="left:86.8px;top:405.3px;font-size:13.5px;letter-spacing:0.22px;color:#111">Figure 3, The Results report of nominal peak-peak circuit measurements after setting test limits.</div>
<div class="t" style="left:86.8px;top:422.4px;font-size:13.5px;letter-spacing:0.22px;color:#111">Monte Carlo measurement tolerances are also shown.</div>
</body></html>
